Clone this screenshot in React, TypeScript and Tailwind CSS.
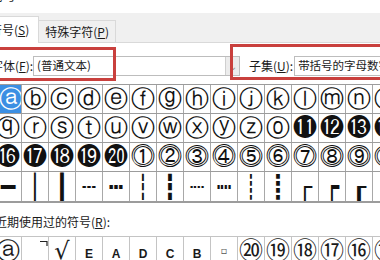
import React from 'react';

const rows: string[][] = [
  ['ⓐ', 'ⓑ', 'ⓒ', 'ⓓ', 'ⓔ', 'ⓕ', 'ⓖ', 'ⓗ', 'ⓘ', 'ⓙ', 'ⓚ', 'ⓛ', 'ⓜ', 'ⓝ', 'ⓞ'],
  ['ⓠ', 'ⓡ', 'ⓢ', 'ⓣ', 'ⓤ', 'ⓥ', 'ⓦ', 'ⓧ', 'ⓨ', 'ⓩ', '⓪', '⓫', '⓬', '⓭', '⓮'],
  ['⓰', '⓱', '⓲', '⓳', '⓴', '⓵', '⓶', '⓷', '⓸', '⓹', '⓺', '⓻', '⓼', '⓽', '⓾'],
  ['━', '│', '┃', '┄', '┅', '┆', '┇', '┈', '┉', '┊', '┋', '┌', '┍', '┎', '┏'],
];

const recent = ['ⓐ', 'corner', '√', 'E', 'A', 'D', 'C', 'B', '▫', '⑳', '⑲', '⑱', '⑰', '⑯', '⑮'];

const Corner = () => (
  <svg width="26" height="28" viewBox="0 0 26 28" className="block">
    <path d="M18 4.5 H25 V9" fill="none" stroke="#222" strokeWidth="1.2" />
  </svg>
);

function RecentCell({ v }: { v: string }) {
  if (v === 'corner') return <Corner />;
  if (/^[A-E]$/.test(v)) {
    return <span className="font-['Liberation_Sans'] font-bold text-[12px] mt-[6px]">{v}</span>;
  }
  if (v === '▫') return <span className="font-['DejaVu_Sans'] text-[10px] text-[#555]">{v}</span>;
  if (v === '√') return <span className="font-['DejaVu_Sans'] text-[24px]">{v}</span>;
  if (v === 'ⓐ') return <span className="font-['DejaVu_Sans'] text-[24px]">{v}</span>;
  return <span className="font-['DejaVu_Serif','Noto_Sans_CJK_SC',serif] text-[24px]">{v}</span>;
}

export default function App() {
  return (
    <div className="w-[380px] h-[260px] overflow-hidden bg-white text-[#1a1a1a] font-['Noto_Sans_CJK_SC','Microsoft_YaHei',sans-serif] relative">
      {/* title bar remnant */}
      <div className="h-[13px] overflow-hidden">
        <div className="-mt-[12px] -ml-[8px] text-[12px] leading-[16px]">符号</div>
      </div>

      {/* tabs */}
      <div className="h-[30px] bg-[#f0f0f0] flex items-end border-b border-[#d9d9d9] -ml-[14px]">
        <div className="h-[27px] -mb-px bg-white border border-b-0 border-[#d9d9d9] pl-[3px] pr-[9px] flex items-center text-[12px] whitespace-nowrap">
          符号(<span className="underline">S</span>)
        </div>
        <div className="h-[22px] bg-[#f0f0f0] border border-b-0 border-l-0 border-[#d9d9d9] px-[6px] flex items-center text-[12px] whitespace-nowrap">
          特殊字符(<span className="underline">P</span>)
        </div>
      </div>

      {/* font / subset */}
      <div className="flex items-center h-[20px] mt-[13px] -ml-[9px] text-[12px] whitespace-nowrap">
        <span className="w-[42px] shrink-0">字体(<span className="underline">F</span>):</span>
        <div className="w-[207px] h-[20px] border border-[#bdbdbd] flex items-center shrink-0">
          <span className="pl-[3px] flex-1 text-[11.5px]">(普通文本)</span>
          <div className="w-[14px] h-[18px] bg-[#ececec] border-l border-[#cfcfcf] flex items-center justify-center text-[#9a9a9a] text-[10px] leading-none">⌄</div>
        </div>
        <span className="ml-[9px] mr-[1px] shrink-0">子集(<span className="underline">U</span>):</span>
        <div className="w-[120px] h-[20px] border border-[#bdbdbd] flex items-center shrink-0">
          <span className="pl-[3px] text-[11.5px]">带括号的字母数字</span>
        </div>
      </div>

      {/* symbol grid */}
      <div className="mt-[8px] -ml-[5px] w-[420px] border-t border-b-2 border-[#9c9c9c]">
        {rows.map((r, ri) => (
          <div key={ri} className={`flex h-[29px] ${ri < 3 ? 'border-b border-[#9c9c9c]' : ''}`}>
            {r.map((c, ci) => {
              const sel = ri === 0 && ci === 0;
              return (
                <div
                  key={ci}
                  className={`w-[27px] shrink-0 border-r border-[#a8a8a8] flex items-center justify-center overflow-hidden font-['DejaVu_Sans',sans-serif] leading-none text-[24px] ${
                    sel ? 'bg-[#3b8fe3] text-white pl-[5px]' : 'text-[#111]'
                  }`}
                >
                  {c}
                </div>
              );
            })}
          </div>
        ))}
      </div>

      {/* recent */}
      <div className="mt-[11px] -ml-[5px] text-[12px] leading-[16px] whitespace-nowrap">
        近期使用过的符号(<span className="underline">R</span>):
      </div>
      <div className="mt-[6px] -ml-[5px] w-[420px] flex h-[29px] border-t border-[#c4c4c4]">
        {recent.map((v, i) => (
          <div key={i} className="w-[27px] shrink-0 border-r border-[#c4c4c4] flex items-center justify-center leading-none overflow-hidden">
            <RecentCell v={v} />
          </div>
        ))}
      </div>

      {/* red annotation boxes */}
      <div className="absolute left-[-3px] top-[47px] w-[119px] h-[34px] border-[3px] border-[#c9403d] pointer-events-none" />
      <div className="absolute left-[230px] top-[44px] w-[160px] h-[36px] border-[3px] border-[#c9403d] pointer-events-none" />
    </div>
  );
}
